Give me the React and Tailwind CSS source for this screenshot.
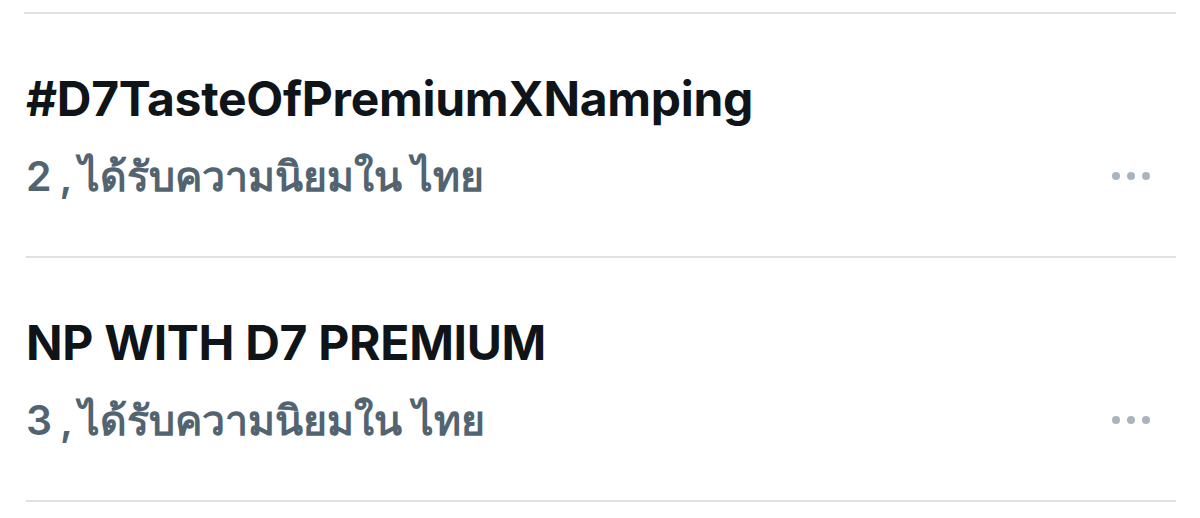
import React from "react";

const trends = [
  { title: "#D7TasteOfPremiumXNamping", rank: 2 },
  { title: "NP WITH D7 PREMIUM", rank: 3 },
];

function MoreDots() {
  return (
    <div className="flex items-center gap-[7px] pr-[26px]">
      <span className="w-[8px] h-[8px] rounded-full bg-[#aab4bf]" />
      <span className="w-[8px] h-[8px] rounded-full bg-[#aab4bf]" />
      <span className="w-[8px] h-[8px] rounded-full bg-[#aab4bf]" />
    </div>
  );
}

function TrendRow({ title, rank }) {
  return (
    <div className="h-[244px] border-b-2 border-[#dfe2e5] flex items-start">
      <div className="flex-1 pt-[57px]">
        <div className="text-[48px] leading-[56px] font-bold text-[#0f1419] tracking-[-0.3px]">
          {title}
        </div>
        <div className="mt-[23px] text-[41px] leading-[52px] font-semibold text-[#536471] flex items-baseline">
          <span>{rank}</span>
          <span className="ml-[8px] mr-[6px]">,</span>
          <span>ได้รับความนิยมใน ไทย</span>
        </div>
      </div>
      <div className="pt-[158px]">
        <MoreDots />
      </div>
    </div>
  );
}

export default function App() {
  return (
    <div
      className="w-[1200px] h-[518px] bg-white overflow-hidden"
      style={{ fontFamily: "Inter, 'Noto Sans', 'DejaVu Sans', sans-serif" }}
    >
      <div className="mx-[24px] pt-[12px]">
        <div className="border-t-2 border-[#dfe2e5]" />
        {trends.map((t) => (
          <div key={t.rank} className="pl-[2px]">
            <TrendRow {...t} />
          </div>
        ))}
      </div>
    </div>
  );
}
